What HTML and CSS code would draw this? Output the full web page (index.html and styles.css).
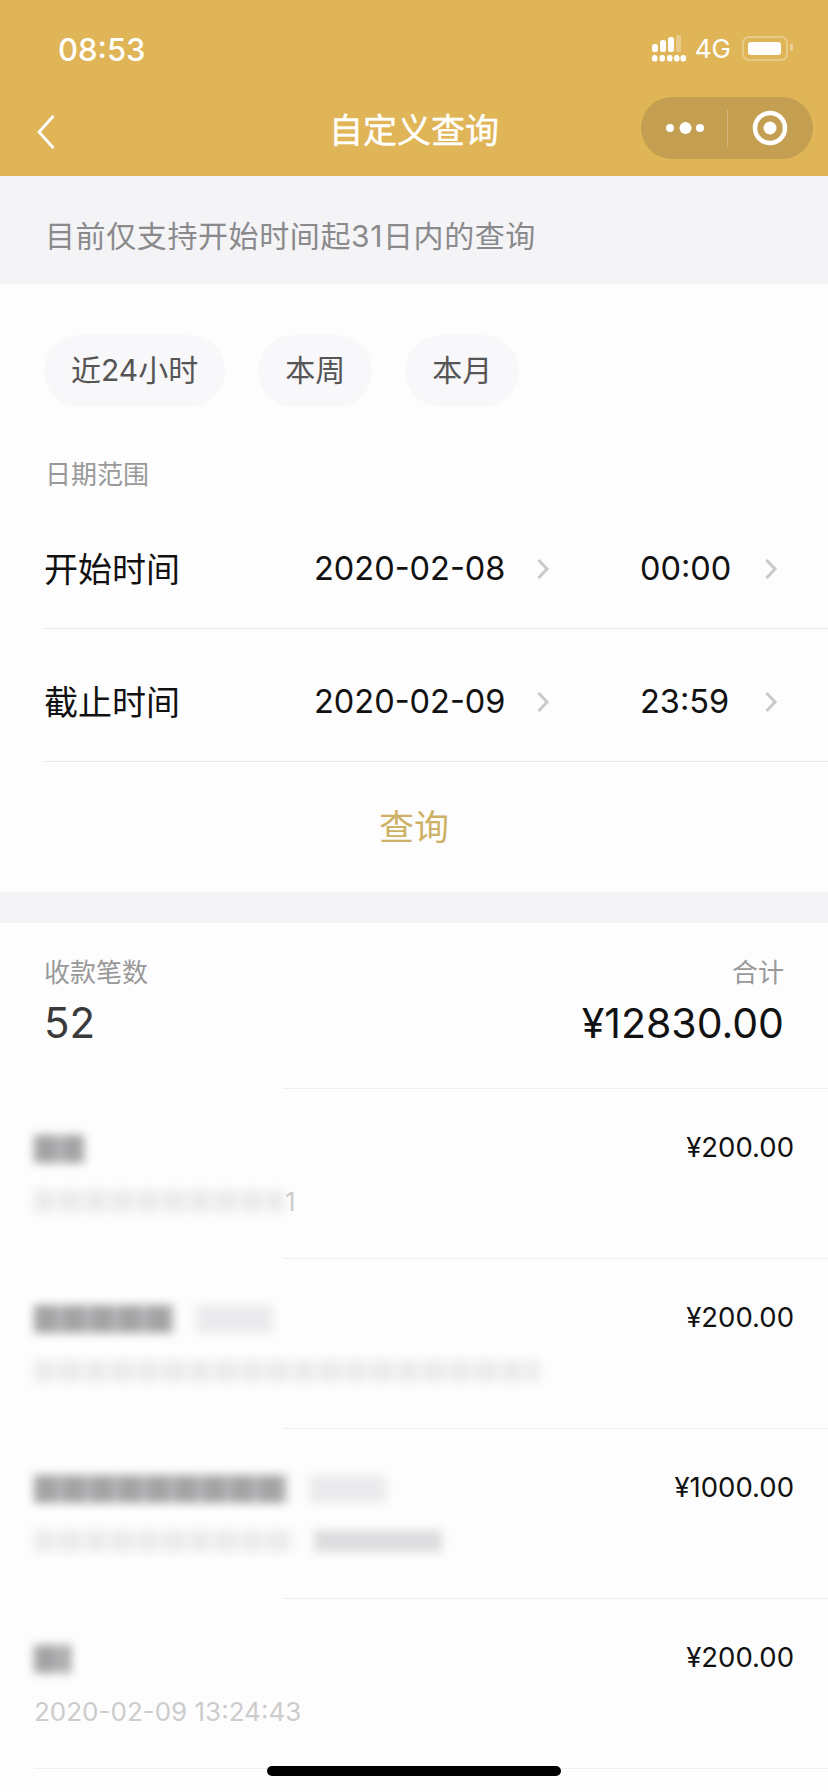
FILE: index.html
```html
<!DOCTYPE html>
<html lang="zh-CN">
<head>
    <meta charset="UTF-8">
    <meta name="viewport" content="width=device-width, initial-scale=1.0">
    <title>自定义查询</title>
    <link rel="stylesheet" href="styles.css">
</head>
<body>
    <div class="header">
        <div class="status-bar">
            <span class="clock">08:53</span>
            <div class="status-icons">
                <svg class="signal" width="34" height="27" viewBox="0 0 34 27">
                    <g fill="#fff">
                        <rect x="0" y="9" width="6" height="8" rx="2.5"/>
                        <rect x="8" y="5" width="6" height="12" rx="2.5"/>
                        <rect x="16" y="2" width="6" height="15" rx="2.5"/>
                        <rect x="0" y="20" width="5.500" height="6.500" rx="2.500"/>
                        <rect x="7.500" y="20" width="5.500" height="6.500" rx="2.500"/>
                        <rect x="15" y="20" width="5.500" height="6.500" rx="2.500"/>
                        <rect x="22" y="20" width="5.500" height="6.500" rx="2.500"/>
                        <rect x="28.500" y="20" width="5.500" height="6.500" rx="2.500"/>
                    </g>
                    <rect x="24" y="0" width="5" height="17" rx="1.500" fill="#fff" opacity=".3"/>
                </svg>
                <span class="network">4G</span>
                <div class="battery"><i></i></div>
            </div>
        </div>
        <div class="nav">
            <svg class="back" width="20" height="36" viewBox="0 0 20 36">
                <path d="M17.500 2 L3 18 L17.500 34" fill="none" stroke="#fff" stroke-width="2.800"/>
            </svg>
            <div class="nav-title">自定义查询</div>
            <div class="capsule">
                <svg class="capsule-more" width="86" height="20" viewBox="0 0 86 20">
                    <circle cx="29" cy="10" r="4" fill="#fff"/>
                    <circle cx="44.500" cy="10" r="6" fill="#fff"/>
                    <circle cx="59" cy="10" r="4" fill="#fff"/>
                </svg>
                <span class="capsule-line"></span>
                <svg class="capsule-close" width="85" height="38" viewBox="0 0 85 38">
                    <circle cx="42" cy="19" r="15" fill="none" stroke="#fff" stroke-width="4.500"/>
                    <circle cx="42" cy="19" r="6.500" fill="#fff"/>
                </svg>
            </div>
        </div>
    </div>

    <div class="notice">目前仅支持开始时间起31日内的查询</div>

    <div class="query">
        <div class="chips">
            <span class="chip">近24小时</span>
            <span class="chip">本周</span>
            <span class="chip">本月</span>
        </div>
        <div class="query-label">日期范围</div>
        <div class="time-row">
            <span class="time-name">开始时间</span>
            <span class="time-date">2020-02-08</span>
            <svg class="arrow arrow-date" width="14" height="22" viewBox="0 0 14 22"><path d="M2.500 2 L11 11 L2.500 20" fill="none" stroke="#c9c9c9" stroke-width="3"/></svg>
            <span class="time-clock">00:00</span>
            <svg class="arrow arrow-clock" width="14" height="22" viewBox="0 0 14 22"><path d="M2.500 2 L11 11 L2.500 20" fill="none" stroke="#c9c9c9" stroke-width="3"/></svg>
        </div>
        <div class="time-row">
            <span class="time-name">截止时间</span>
            <span class="time-date">2020-02-09</span>
            <svg class="arrow arrow-date" width="14" height="22" viewBox="0 0 14 22"><path d="M2.500 2 L11 11 L2.500 20" fill="none" stroke="#c9c9c9" stroke-width="3"/></svg>
            <span class="time-clock">23:59</span>
            <svg class="arrow arrow-clock" width="14" height="22" viewBox="0 0 14 22"><path d="M2.500 2 L11 11 L2.500 20" fill="none" stroke="#c9c9c9" stroke-width="3"/></svg>
        </div>
        <div class="query-btn">查询</div>
    </div>

    <div class="summary">
        <div>
            <div class="summary-label">收款笔数</div>
            <div class="summary-count">52</div>
        </div>
        <div class="summary-right">
            <div class="summary-label">合计</div>
            <div class="summary-total">¥12830.00</div>
        </div>
    </div>
    <div class="rule rule-short"></div>

    <!-- names and notes are blurred out in the source too -->
    <div class="record">
        <div>
            <div class="record-name"><span class="smear smear-dark w-50"></span></div>
            <div class="record-date"><span class="smear w-250"></span><span class="record-tail">1</span></div>
        </div>
        <div class="record-amount">¥200.00</div>
    </div>
    <div class="rule rule-short"></div>
    <div class="record">
        <div>
            <div class="record-name"><span class="smear smear-dark w-140"></span><span class="smear smear-tag w-77"></span></div>
            <div class="record-date"><span class="smear w-505"></span></div>
        </div>
        <div class="record-amount">¥200.00</div>
    </div>
    <div class="rule rule-short"></div>
    <div class="record">
        <div>
            <div class="record-name"><span class="smear smear-dark w-253"></span><span class="smear smear-tag w-77"></span></div>
            <div class="record-date"><span class="smear w-260"></span><span class="smear smear-note w-128"></span></div>
        </div>
        <div class="record-amount">¥1000.00</div>
    </div>
    <div class="rule rule-short"></div>
    <div class="record">
        <div>
            <div class="record-name"><span class="smear smear-dark w-37"></span></div>
            <div class="record-date">2020-02-09 13:24:43</div>
        </div>
        <div class="record-amount">¥200.00</div>
    </div>
    <div class="rule"></div>

    <div class="home-bar"></div>
</body>
</html>
```

FILE: styles.css
```css
* {
    padding: 0;
    margin: 0;
    box-sizing: border-box;
}
body {
    position: relative;
    width: 828px;
    height: 1792px;
    overflow: hidden;
    background-color: #fefdfe;
    font-family: Inter, "Noto Sans CJK SC", sans-serif;
    color: #111;
}

/* top bar */
.header {
    height: 176px;
    background-color: #dfb557;
    color: #fff;
}
.status-bar {
    display: flex;
    justify-content: space-between;
    align-items: center;
    height: 97px;
    padding: 0 40px 0 58px;
}
.clock {
    font-size: 31px;
    font-weight: 500;
    margin-top: 2px;
}
.status-icons {
    display: flex;
    align-items: center;
}
.signal {
    margin-right: 9px;
}
.network {
    font-size: 26px;
    margin-right: 11px;
}
.battery {
    position: relative;
    width: 46px;
    height: 25px;
    padding: 4px;
    border: 2px solid rgba(255, 255, 255, 0.3);
    border-radius: 7px;
}
.battery i {
    display: block;
    width: 33px;
    height: 100%;
    background-color: #fff;
    border-radius: 3px;
}
.battery::after {
    content: "";
    position: absolute;
    right: -7px;
    top: 6px;
    width: 3px;
    height: 7px;
    background-color: rgba(255, 255, 255, 0.4);
    border-radius: 0 2px 2px 0;
}
.nav {
    display: grid;
    grid-template-columns: 1fr auto 1fr;
    align-items: start;
    padding: 0 15px;
}
.back {
    margin: 17px 0 0 21px;
}
.nav-title {
    font-size: 34px;
    line-height: 48px;
    margin-top: 10px;
    -webkit-text-stroke: 0.4px #fff;
}
.capsule {
    justify-self: end;
    display: flex;
    align-items: center;
    width: 172px;
    height: 62px;
    background-color: #c49f51;
    border-radius: 31px;
}
.capsule-line {
    width: 1px;
    height: 37px;
    background-color: rgba(255, 255, 255, 0.25);
}

.notice {
    display: flex;
    align-items: center;
    height: 108px;
    padding: 8px 0 0 45px;
    font-size: 30px;
    letter-spacing: 0.6px;
    color: #8a8a8c;
    background-color: #f4f3f6;
}

/* query form */
.query {
    padding-top: 51px;
    background-color: #fefdfe;
}
.chips {
    display: flex;
    gap: 33px;
    padding-left: 44px;
}
.chip {
    height: 72px;
    line-height: 70px;
    padding: 0 27px;
    font-size: 30px;
    color: #555;
    background-color: #f8f7f9;
    border-radius: 36px;
}
.query-label {
    margin: 50px 0 3px 45px;
    font-size: 26px;
    line-height: 36px;
    color: #999;
}
.time-row {
    display: flex;
    align-items: center;
    height: 133px;
    margin-left: 44px;
    padding-top: 13px;
    border-bottom: 1px solid #e9e8ea;
    font-size: 32.5px;
    white-space: nowrap;
}
.time-name {
    width: 270px;
    margin-top: -3px;
    font-size: 34px;
}
.time-date {
    width: 190px;
}
.arrow-date {
    margin: 0 90px 0 32px;
}
.time-clock {
    width: 89px;
}
.arrow-clock {
    margin-left: 35px;
}
.query-btn {
    height: 130px;
    line-height: 130px;
    text-align: center;
    font-size: 35px;
    color: #cdb265;
}

/* totals */
.summary {
    display: flex;
    justify-content: space-between;
    height: 196px;
    padding: 32px 44px 0 44px;
    border-top: 31px solid #f4f3f6;
}
.summary-label {
    font-size: 26px;
    line-height: 36px;
    color: #999;
}
.summary-right {
    text-align: right;
}
.summary-count {
    margin-top: 4px;
    font-size: 42px;
    line-height: 56px;
    color: #3a3a3c;
}
.summary-total {
    margin-top: 4px;
    font-size: 41px;
    line-height: 56px;
}
.rule {
    height: 1px;
    margin-left: 34px;
    background-color: #efeef0;
}
.rule-short {
    margin-left: 283px;
}

/* list */
.record {
    display: flex;
    justify-content: space-between;
    align-items: flex-start;
    height: 169px;
    padding: 40px 34px 0 34px;
}
.record-name {
    display: flex;
    align-items: center;
    height: 40px;
}
.record-date {
    display: flex;
    align-items: center;
    height: 36px;
    margin-top: 14px;
    font-size: 26px;
    color: #ccc;
}
.record-amount {
    font-size: 27.5px;
    line-height: 36px;
}
.smear {
    display: block;
    height: 22px;
    background: repeating-linear-gradient(90deg, #ebeaec 0 20px, #f6f5f7 20px 26px);
    filter: blur(5px);
}
.smear-dark {
    height: 28px;
    background: repeating-linear-gradient(90deg, #a4a3a5 0 24px, #c6c5c7 24px 28px);
}
.smear-tag {
    margin-left: 22px;
    height: 28px;
    background: #ebeaec;
}
.smear-note {
    margin-left: 20px;
    background: #dddcde;
}
.record-tail {
    margin-left: 1px;
}
.w-37 { width: 37px; }
.w-50 { width: 50px; }
.w-77 { width: 77px; }
.w-128 { width: 128px; }
.w-140 { width: 140px; }
.w-250 { width: 250px; }
.w-253 { width: 253px; }
.w-260 { width: 260px; }
.w-505 { width: 505px; }

.home-bar {
    position: absolute;
    left: 267px;
    top: 1766px;
    width: 294px;
    height: 10px;
    background-color: #000;
    border-radius: 5px;
}
```
